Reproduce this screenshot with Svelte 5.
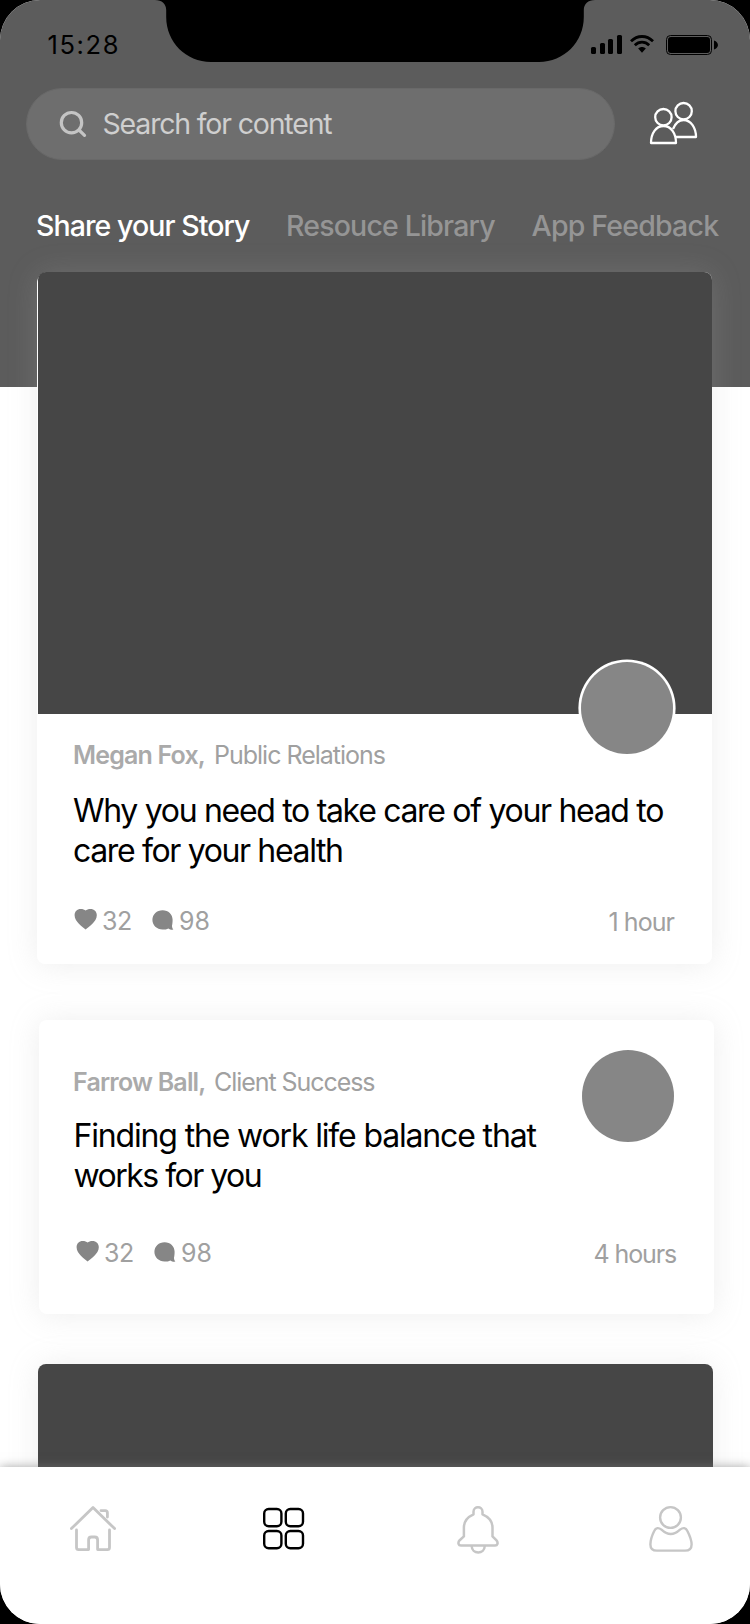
<script>
  const tabs = [
    { label: 'Share your Story', active: true, spacing: -0.92 },
    { label: 'Resouce Library', active: false, spacing: -0.83 },
    { label: 'App Feedback', active: false, spacing: -0.8 }
  ];

  const posts = [
    {
      kind: 'cover',
      author: 'Megan Fox,',
      authorSpacing: -0.83,
      team: 'Public Relations',
      teamSpacing: -1,
      lines: [
        { text: 'Why you need to take care of your head to', spacing: -1.31 },
        { text: 'care for your health', spacing: -1.36 }
      ],
      time: '1 hour',
      timeSpacing: -0.95
    },
    {
      kind: 'plain',
      author: 'Farrow Ball,',
      authorSpacing: -0.8,
      team: 'Client Success',
      teamSpacing: -1.06,
      lines: [
        { text: 'Finding the work life balance that', spacing: -1.16 },
        { text: 'works for you', spacing: -1.52 }
      ],
      time: '4 hours',
      timeSpacing: -1.13
    }
  ];
</script>

<div class="device">
  <div class="screen">
    <header>
      <div class="status">
        <span class="clock">15:28</span>
        <svg class="indicators" width="130" height="22" viewBox="590 34 130 22" aria-hidden="true">
          <rect x="591" y="47" width="5" height="7" rx="1.5" />
          <rect x="600" y="43" width="5" height="11" rx="1.5" />
          <rect x="608" y="39" width="5" height="15" rx="1.5" />
          <rect x="617" y="35" width="5" height="19" rx="1.5" />
          <g fill="none" stroke="#000" stroke-width="2.8">
            <path d="M631 41.2 C637.4 34.9 646.6 34.9 653 41.2" />
            <path d="M634.8 45.2 C639 41.2 645 41.2 649.2 45.2" />
          </g>
          <path d="M638.2 48.6 C640.4 46.6 643.6 46.6 645.8 48.6 L642 52.8 Z" />
          <rect x="666.5" y="35.5" width="45" height="19" rx="4" fill="none" stroke="#000" />
          <rect x="668" y="37" width="42" height="16" rx="3" />
          <path d="M714 40.5 C719.3 42.3 719.3 47.7 714 49.5 Z" />
        </svg>
      </div>

      <div class="search-row">
        <div class="search">
          <svg width="28" height="28" viewBox="0 0 28 28" aria-hidden="true">
            <g fill="none" stroke="#c4c4c4" stroke-width="3.2" stroke-linecap="round">
              <circle cx="12.5" cy="12.7" r="10.2" />
              <path d="M20 20 L25.5 25.3" />
            </g>
          </svg>
          <span>Search for content</span>
        </div>
        <svg class="people" width="50" height="46" viewBox="649 100 50 46" aria-hidden="true">
          <g fill="none" stroke="#fff" stroke-width="2.3" stroke-linejoin="round">
            <circle cx="683.6" cy="111.2" r="8.2" />
            <path d="M673 129 C675.5 123 679 120 683.6 120 C691 120 696 128 696 137 H676" />
            <circle cx="663.4" cy="117.2" r="8.2" />
            <path d="M651 143 C651 133.5 656 126 663.5 126 C671 126 676 133.5 676 143 Z" />
          </g>
        </svg>
      </div>

      <nav class="tabs">
        {#each tabs as tab}
          <span class:active={tab.active} style="letter-spacing: {tab.spacing}px">{tab.label}</span>
        {/each}
      </nav>
    </header>

    <main>
      {#each posts as post}
        <article class="card {post.kind}">
          {#if post.kind === 'cover'}<div class="image"></div>{/if}
          <div class="avatar"></div>
          <div class="body">
            <p class="byline">
              <strong style="letter-spacing: {post.authorSpacing}px">{post.author}</strong>
              <span style="letter-spacing: {post.teamSpacing}px">{post.team}</span>
            </p>
            <h2>
              {#each post.lines as line}
                <span style="letter-spacing: {line.spacing}px">{line.text}</span>
              {/each}
            </h2>
            <div class="stats">
              <svg width="24" height="22" viewBox="0 0 24 22" aria-hidden="true">
                <path fill="#868686" d="M11.6 21.4 C9 19 .6 14 .6 7.2 C.6 3.4 3.2 1 6.6 1 C8.8 1 10.6 1.5 11.6 2.6 C12.6 1.5 14.4 1 16.6 1 C20 1 22.8 3.4 22.8 7.2 C22.8 14 14.2 19 11.6 21.4 Z" />
              </svg>
              <span class="likes">32</span>
              <svg class="bubble" width="22" height="22" viewBox="0 0 22 22" aria-hidden="true">
                <path fill="#868686" d="M10.6 1.2 C16.4 1.2 20.6 5.4 20.6 10.8 C20.6 13.4 20.4 15.2 20 16.6 C20 18.4 20.4 19.6 21.4 20.6 C19.4 20.8 17.6 20.4 16.4 19.4 C14.8 20.2 12.8 20.6 10.6 20.6 C4.8 20.6 .4 16.2 .4 10.8 C.4 5.4 4.8 1.2 10.6 1.2 Z" />
              </svg>
              <span class="comments">98</span>
              <span class="time" style="letter-spacing: {post.timeSpacing}px">{post.time}</span>
            </div>
          </div>
        </article>
      {/each}
      <article class="card peek"></article>
    </main>

    <footer>
      <svg width="48" height="50" viewBox="69 1505 48 50" aria-hidden="true">
        <g fill="none" stroke="#c6c6c6" stroke-width="2.8" stroke-linecap="round" stroke-linejoin="round">
          <path d="M71.4 1528.6 L93 1507.6 L114.6 1528.6" />
          <path d="M101 1510.6 H105.2 Q107.4 1510.6 107.4 1512.8 V1517" />
          <path d="M76.5 1530 V1547.5 Q76.5 1549.6 78.6 1549.6 H88.6 V1540 Q88.6 1537 91.4 1537 H94.8 Q97.6 1537 97.6 1540 V1549.6 H107.4 Q109.5 1549.6 109.5 1547.5 V1530" />
        </g>
      </svg>
      <svg class="grid" width="44" height="50" viewBox="262 1505 44 50" aria-hidden="true">
        <g fill="none" stroke="#000" stroke-width="2.4">
          <rect x="264.2" y="1509" width="17.2" height="17.2" rx="4.5" />
          <rect x="285.8" y="1509" width="17.2" height="17.2" rx="4.5" />
          <rect x="264.2" y="1531" width="17.2" height="17.2" rx="4.5" />
          <rect x="285.8" y="1531" width="17.2" height="17.2" rx="4.5" />
        </g>
      </svg>
      <svg width="44" height="50" viewBox="455.3 1505 44 50" aria-hidden="true">
        <g fill="none" stroke="#c6c6c6" stroke-width="2.5" stroke-linejoin="round">
          <path d="M472.8 1514.3 V1511.8 C472.8 1505.7 481.8 1505.7 481.8 1511.8 V1514.3 C488.6 1517.2 491.8 1521.7 491.8 1527.5 V1536.4 L495.6 1540.2 C497.9 1542.8 496.8 1545.4 494.4 1545.4 H460.2 C457.8 1545.4 456.7 1542.8 459 1540.2 L463.2 1536.4 V1527.5 C463.2 1521.7 466.4 1517.2 472.8 1514.3 Z" />
          <path d="M471 1546 C471 1554.6 484 1554.6 484 1546" />
        </g>
      </svg>
      <svg width="46" height="50" viewBox="648 1504 46 50" aria-hidden="true">
        <g fill="none" stroke="#c6c6c6" stroke-width="2.4" stroke-linejoin="round">
          <circle cx="670.5" cy="1516.5" r="10.4" />
          <path d="M661.5 1528.6 C667.5 1534.2 674 1534.2 680 1528.6 C683 1526.4 685.8 1526.4 687.4 1530 C690 1535.2 691.6 1539.6 691.6 1543.4 C691.6 1547.6 689.6 1549.6 685 1549.6 H657 C652.4 1549.6 650.4 1547.6 650.4 1543.4 C650.4 1539.6 651.6 1535.2 654.2 1530 C655.8 1526.4 658.6 1526.4 661.5 1528.6 Z" />
        </g>
      </svg>
    </footer>
  </div>
  <svg class="notch" width="440" height="62" viewBox="155 0 440 62" aria-hidden="true">
    <path d="M155 0 C162 0 166.2 4 166.2 10 V17 C166.2 42 186 62 211 62 H539 C564 62 583.8 42 583.8 17 V10 C583.8 4 588 0 595 0 Z" />
  </svg>
</div>

<style>
  :global(body) {
    margin: 0;
    background: #000;
  }
  .device {
    position: relative;
    width: 750px;
    height: 1624px;
    background: #000;
    font-family: Inter, 'Liberation Sans', sans-serif;
  }
  .screen {
    box-sizing: border-box;
    display: flex;
    flex-direction: column;
    height: 1624px;
    overflow: hidden;
    border-radius: 40px;
    background: #fff;
  }
  .notch {
    position: absolute;
    top: 0;
    left: 155px;
  }
  svg {
    display: block;
    flex: none;
  }
  header {
    box-sizing: border-box;
    flex: none;
    height: 387px;
    background: #5c5c5c;
  }
  .status {
    display: flex;
    justify-content: space-between;
    height: 56px;
    padding: 0 30px 0 47.5px;
    align-items: flex-end;
  }
  .clock {
    font-size: 25.5px;
    font-weight: 400;
    line-height: 22px;
    letter-spacing: 1.6px;
  }
  .search-row {
    display: flex;
    justify-content: space-between;
    padding: 32px 51px 0 26px;
  }
  .search {
    box-sizing: border-box;
    display: flex;
    align-items: center;
    gap: 15px;
    width: 589px;
    height: 72px;
    padding-left: 32px;
    border: 1px solid #696969;
    border-radius: 36px;
    background: #6e6e6e;
    color: #cfcfcf;
    font-size: 28.5px;
    line-height: 36px;
    letter-spacing: -1.18px;
  }
  .search span {
    padding-left: 0.5px;
  }
  .people {
    margin-top: 12px;
  }
  .tabs {
    display: flex;
    padding: 48px 0 0 36px;
    font-size: 28.5px;
    font-weight: 500;
    line-height: 36px;
    color: #959595;
    white-space: nowrap;
  }
  .tabs span:nth-child(1) {
    width: 250px;
  }
  .tabs span:nth-child(2) {
    width: 245.5px;
  }
  .tabs .active {
    color: #fff;
  }
  main {
    flex: none;
    display: flex;
    flex-direction: column;
    height: 1195px;
    margin-top: -115px;
    overflow: visible;
  }
  .card {
    position: relative;
    flex: none;
    width: 675px;
    border-radius: 8px;
    background: #fff;
    box-shadow: 0 1px 30px rgba(178, 178, 178, 0.22);
  }
  .cover {
    height: 692px;
    margin-left: 37px;
    border-top-left-radius: 11px;
  }
  .image {
    height: 442px;
    margin-left: 1px;
    border-radius: 8px 8px 0 0;
    background: #464646;
  }
  .plain {
    height: 294px;
    margin: 56px 0 0 39px;
  }
  .peek {
    height: 160px;
    margin: 50px 0 0 38px;
    background: #464646;
  }
  .avatar {
    position: absolute;
    width: 92px;
    height: 92px;
    border-radius: 50%;
    background: #868686;
  }
  .cover .avatar {
    top: 390px;
    left: 544px;
    box-shadow: 0 0 0 2.6px #fff;
  }
  .plain .avatar {
    top: 30px;
    left: 543px;
  }
  .body {
    padding: 26px 38px 0 36px;
  }
  .plain .body {
    padding: 47px 39px 0 34px;
  }
  .byline {
    display: flex;
    margin: 0;
    font-size: 25px;
    line-height: 30px;
    color: #a0a0a0;
    white-space: nowrap;
  }
  .byline strong {
    width: 141px;
    font-weight: 600;
    color: #aaa;
  }
  h2 {
    margin: 21px 0 0;
    font-size: 32px;
    font-weight: 400;
    line-height: 40px;
    white-space: nowrap;
    color: #000;
  }
  .plain h2 {
    margin: 19px 0 0 0.5px;
  }
  h2 span {
    display: block;
  }
  .stats {
    display: flex;
    margin: 35px 0 0 1px;
    font-size: 25px;
    line-height: 30px;
    color: #a0a0a0;
  }
  .plain .stats {
    margin: 42px -1px 0 3px;
  }
  .stats svg {
    margin-top: 2px;
  }
  .likes {
    width: 50px;
    margin-left: 4px;
    letter-spacing: -0.5px;
  }
  .stats .bubble {
    margin-top: 3px;
  }
  .comments {
    margin-left: 5px;
  }
  .time {
    margin-left: auto;
    margin-top: 1px;
  }
  footer {
    position: relative;
    box-sizing: border-box;
    flex: none;
    display: flex;
    justify-content: space-between;
    height: 157px;
    padding: 38px 56px 0 69px;
    background: #fff;
    box-shadow: 0 0 10px rgba(120, 120, 120, 0.65);
  }
  .grid {
    margin: 0 3px 0 -3px;
  }
</style>
